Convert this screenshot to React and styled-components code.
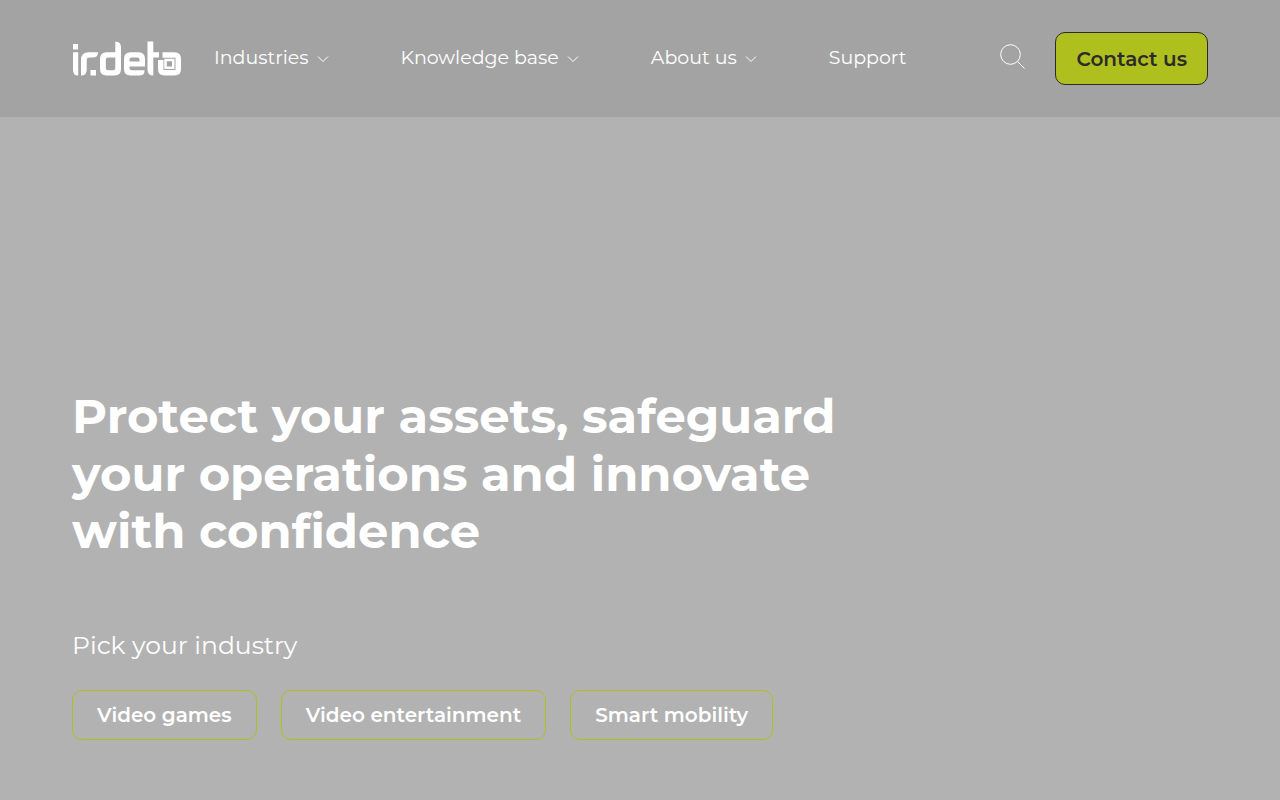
import React from "react";
import styled, { createGlobalStyle } from "styled-components";

const GlobalStyle = createGlobalStyle`
  *, *::before, *::after { box-sizing: border-box; }
  body {
    margin: 0;
    background: #b2b2b2;
    color: #fff;
    font-family: Montserrat, Inter, "Open Sans", sans-serif;
  }
`;

const Page = styled.div`
  min-height: 100vh;
  display: flex;
  flex-direction: column;
`;

const Header = styled.header`
  display: flex;
  align-items: center;
  padding: 32px 72px;
  background: #a3a3a3;
`;

const LogoLink = styled.a`
  display: block;
  height: 36px;
  margin-right: 32px;
`;

const Nav = styled.nav`
  display: flex;
  flex: 1;
  gap: 72px;
  padding-bottom: 2px;
`;

const NavLink = styled.a`
  display: flex;
  align-items: center;
  gap: 8px;
  color: inherit;
  font-size: 19px;
  line-height: 24px;
  text-decoration: none;
  white-space: nowrap;
`;

const SearchButton = styled.button`
  display: block;
  margin-right: 29px;
  padding: 0 0 4px;
  border: 0;
  background: none;
  color: inherit;
  cursor: pointer;

  svg { display: block; }
`;

const ContactButton = styled.button`
  height: 53px;
  padding: 0 20px;
  border: 1px solid #2b2b2b;
  border-radius: 10px;
  background: #afbf1e;
  color: #2b2b2b;
  font: inherit;
  font-size: 20px;
  font-weight: 600;
  white-space: nowrap;
  cursor: pointer;
`;

const Hero = styled.main`
  flex: 1;
  display: flex;
  flex-direction: column;
  justify-content: flex-end;
  padding: 72px 72px 60px;
`;

const Title = styled.h1`
  max-width: 800px;
  margin: 0 0 67px;
  font-size: 48px;
  font-weight: 700;
  line-height: 1.2;
`;

const Prompt = styled.p`
  margin: 0 0 28px;
  font-size: 25px;
  font-weight: 400;
  line-height: 34px;
`;

const Choices = styled.div`
  display: flex;
  flex-wrap: wrap;
  gap: 24px;
`;

const ChoiceButton = styled.button`
  height: 50px;
  padding: 0 24px;
  border: 1px solid #afbf1e;
  border-radius: 10px;
  background: none;
  color: inherit;
  font: inherit;
  font-size: 20px;
  font-weight: 600;
  white-space: nowrap;
  cursor: pointer;
`;

function Logo() {
  return (
    <svg width="110" height="36" viewBox="0 0 110 36" fill="#fff" fillRule="evenodd" aria-hidden="true">
      <path d="M1 3h5v5.5H1z" />
      <path d="M1 11.3h5.2V34.5Q1 34.5 1 29z" />
      <path d="M9 34.5V19Q9 11.3 16.500 11.3H26V12Q25.500 16.5 21 16.5H17Q14.700 16.500 14.700 19V29Q14.700 34.5 9 34.5z" />
      <path d="M18.500 29h5.500v5.500h-5.500z" />
      <path d="M43.300 .5Q49 .5 49 6.500V28Q49 34.500 42.500 34.500H34.500Q28 34.500 28 28V18Q28 11.300 34.500 11.300H43.300zM43.300 16.500H36Q33.800 16.500 33.800 18.700V27Q33.800 29.300 36 29.300H41.200Q43.300 29.300 43.300 27z" />
      <path d="M58.500 11.300H66.500Q73 11.300 73 18V25.500H57.500V27Q57.500 29.300 60 29.300H72.500V30Q72.500 34.500 67 34.500H58.500Q52 34.500 52 28V18Q52 11.300 58.500 11.300zM57.500 20.500H67.500V18.500Q67.500 16.500 65.500 16.500H59.700Q57.500 16.500 57.500 18.700z" />
      <path d="M75.500 .5H81.300V11.300H87V16.500H81.300V34.500Q75.500 34.500 75.500 28.500z" />
      <path d="M90.500 11.300H102.500Q109 11.300 109 18V28Q109 34.500 102.500 34.500H92.500Q86 34.500 86 28V19H91.500V29H103.500V16.800H90.500z" />
      <path d="M92.300 17.800h10.200v10.200h-10.200zM94.800 20.300v5.200h5.200V20.300z" />
    </svg>
  );
}

function Chevron() {
  return (
    <svg width="12" height="10" viewBox="0 0 12 10" fill="none" stroke="currentColor" aria-hidden="true">
      <path d="M1 3.500 6 8.500 11 3.500" />
    </svg>
  );
}

const menu = [
  { label: "Industries", hasMenu: true },
  { label: "Knowledge base", hasMenu: true },
  { label: "About us", hasMenu: true },
  { label: "Support", hasMenu: false },
];

const industries = ["Video games", "Video entertainment", "Smart mobility"];

export default function App() {
  return (
    <Page>
      <GlobalStyle />
      <Header>
        <LogoLink href="#" aria-label="Irdeto">
          <Logo />
        </LogoLink>
        <Nav>
          {menu.map(({ label, hasMenu }) => (
            <NavLink href="#" key={label}>
              {label}
              {hasMenu && <Chevron />}
            </NavLink>
          ))}
        </Nav>
        <SearchButton aria-label="Search">
          <svg width="26" height="26" viewBox="0 0 26 26" fill="none" stroke="currentColor" aria-hidden="true">
            <circle cx="10.500" cy="10.500" r="9.800" />
            <path d="M17.300 17.300 24.500 24.500" />
          </svg>
        </SearchButton>
        <ContactButton>Contact us</ContactButton>
      </Header>
      <Hero>
        <Title>Protect your assets, safeguard your operations and innovate with confidence</Title>
        <Prompt>Pick your industry</Prompt>
        <Choices>
          {industries.map((name) => (
            <ChoiceButton key={name}>{name}</ChoiceButton>
          ))}
        </Choices>
      </Hero>
    </Page>
  );
}
